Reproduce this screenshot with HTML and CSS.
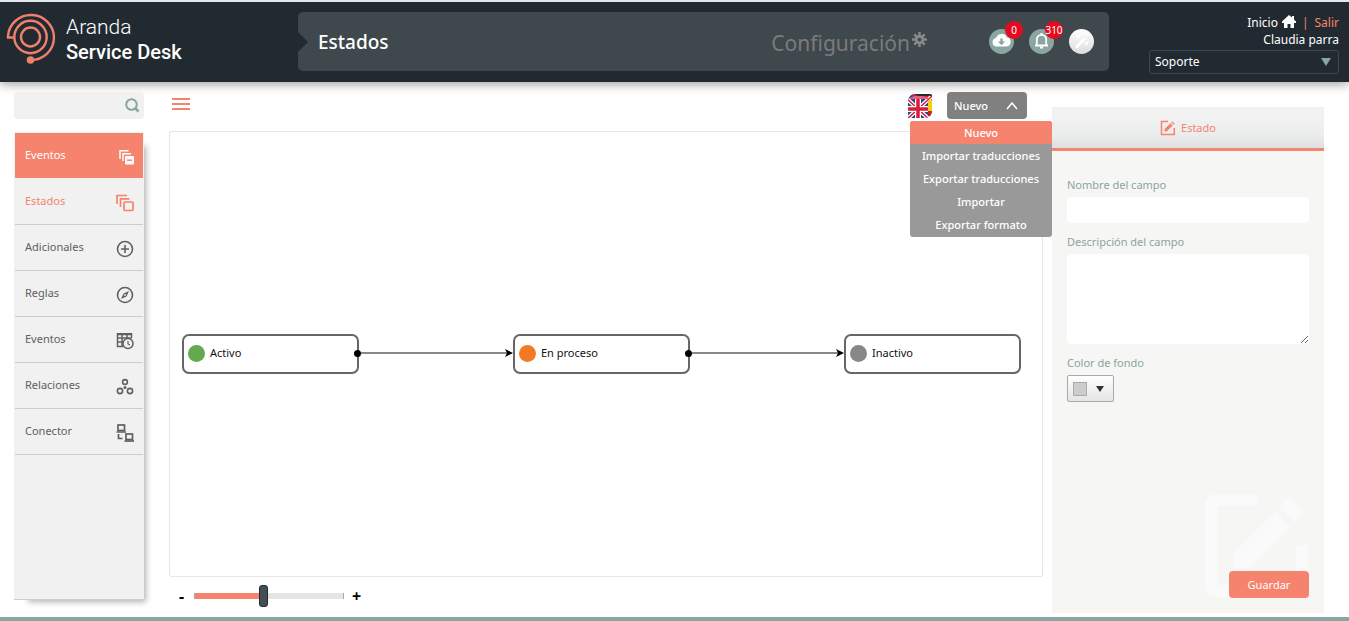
FILE: index.html
```html
<!DOCTYPE html>
<html lang="es">
<head>
<meta charset="utf-8">
<meta name="viewport" content="width=device-width, initial-scale=1">
<title>Aranda Service Desk - Estados</title>
<link rel="stylesheet" href="styles.css">
</head>
<body>
<header class="topbar">
  <div class="brand">
    <svg class="brand-logo" viewBox="0 0 50 52" fill="none" stroke="#f0806c" stroke-width="2.400" aria-hidden="true">
      <circle cx="24.500" cy="25" r="9.500"/>
      <path d="M8.500 25.500H2V24A23 22.500 0 1 1 25 48"/>
      <circle cx="24.500" cy="25" r="16.200"/>
      <circle cx="24.500" cy="48" r="3.800" fill="#f0806c" stroke="none"/>
    </svg>
    <div class="brand-name"><span class="brand-light">Aranda</span><span class="brand-bold">Service Desk</span></div>
  </div>
  <div class="titlebar">
    <h1 class="page-title">Estados</h1>
    <div class="module">Configuración
      <svg class="gear" viewBox="0 0 16 16" aria-hidden="true"><g stroke="#8a8a8a" stroke-width="2.600"><path d="M8 0V16M0 8H16M2.500 2.500L13.500 13.500M13.500 2.500L2.500 13.500"/></g><circle cx="8" cy="8" r="4.800" fill="#8a8a8a"/><circle cx="8" cy="8" r="2" fill="#3e484d"/></svg>
    </div>
    <div class="actions">
      <button class="round" aria-label="Descargas">
        <svg viewBox="0 0 25 25" aria-hidden="true"><path fill="#fff" d="M7.500 17.500a4.300 4.300 0 0 1-.5-8.500 5.800 5.800 0 0 1 10.800-.8 4.700 4.700 0 0 1-.3 9.300z"/><path fill="#8ba5a1" d="M11.300 9.500h2.400v3h2.500l-3.700 3.700-3.700-3.700h2.500z"/></svg>
        <span class="badge">0</span>
      </button>
      <button class="round" aria-label="Notificaciones">
        <svg viewBox="0 0 25 25" fill="none" stroke="#fff" stroke-width="1.800" aria-hidden="true"><path d="M6 16.500h13M7.800 16.500v-6a4.700 4.700 0 0 1 9.400 0v6"/><path d="M12.500 4v2M11 18.500h3" stroke-width="2"/></svg>
        <span class="badge">310</span>
      </button>
      <button class="round round-light" aria-label="Asistente">
        <svg viewBox="0 0 25 25" stroke="#fff" fill="none" aria-hidden="true"><path stroke-width="3" d="M7 18.500L16 9.500"/><path stroke-width="1.500" d="M8 6l3 3M11 6L8 9M16 13l3 3M19 13l-3 3M16 5l2 2"/></svg>
      </button>
    </div>
  </div>
  <div class="account">
    <nav class="account-links">
      <a href="#">Inicio <svg class="home" viewBox="0 0 14 13" aria-hidden="true"><path fill="#fff" d="M7 0l3 2.600V1h2v3.500l2 2V8h-2v5H8.500V9h-3v4H2V8H0V6.500z"/></svg></a>
      <span class="sep">|</span>
      <a class="logout" href="#">Salir</a>
    </nav>
    <div>Claudia parra</div>
    <div class="role">
      <select class="role-select" aria-label="Rol"><option>Soporte</option></select>
      <svg class="role-arrow" viewBox="0 0 10 8" aria-hidden="true"><path fill="#8ba5a1" d="M0 0h10L5 8z"/></svg>
    </div>
  </div>
</header>

<main class="main">
  <aside class="side">
    <div class="search">
      <input class="search-input" type="text" aria-label="Buscar">
      <svg class="search-icon" viewBox="0 0 15 15" fill="none" stroke="#8ba5a1" aria-hidden="true"><circle cx="6.500" cy="6.500" r="5.300" stroke-width="2"/><path d="M10 10l3.500 3.500" stroke-width="2.500"/></svg>
    </div>
    <nav class="menu">
      <a class="item item-head" href="#">Eventos
        <svg class="icon" viewBox="0 0 18 18" fill="none" stroke="#fff" stroke-width="1.500" aria-hidden="true"><path d="M4 11V2.800h8.500M7 13V5.800h8"/><rect x="9" y="8" width="9" height="8.500" rx="1" fill="#fff" stroke="none"/><path stroke="#f6836e" d="M11 12.200h5"/></svg></a>
      <a class="item item-current" href="#">Estados
        <svg class="icon" viewBox="0 0 18 18" fill="none" stroke="#f6836e" stroke-width="1.700" aria-hidden="true"><path d="M1 10V1.500h10M4.500 13V4.800h9"/><rect x="8" y="8" width="9" height="8.500" rx="1"/></svg></a>
      <a class="item" href="#">Adicionales
        <svg class="icon" viewBox="0 0 18 18" fill="none" stroke="#606060" stroke-width="1.600" aria-hidden="true"><circle cx="9" cy="9" r="7.500"/><path d="M9 5v8M5 9h8"/></svg></a>
      <a class="item" href="#">Reglas
        <svg class="icon" viewBox="0 0 18 18" fill="none" stroke="#606060" stroke-width="1.600" aria-hidden="true"><circle cx="9" cy="9" r="7.500"/><path stroke="none" fill="#606060" fill-rule="evenodd" d="M13 5l-2.500 5.500L5 13l2.500-5.500zM9 8.100a.9.9 0 1 0 0 1.800.9.9 0 0 0 0-1.800z"/></svg></a>
      <a class="item" href="#">Eventos
        <svg class="icon" viewBox="0 0 18 18" fill="none" stroke="#606060" stroke-width="1.500" aria-hidden="true"><path d="M7 14.500H1.500V1.800h14V6M1.500 2.500h14M1.500 6h14M1.500 10H7M6 1.500v13M11 1.500V6"/><circle cx="12" cy="11.500" r="5"/><path d="M12 9v3l2 1" stroke-width="1.200"/></svg></a>
      <a class="item" href="#">Relaciones
        <svg class="icon" viewBox="0 0 18 18" fill="none" stroke="#606060" stroke-width="1.600" aria-hidden="true"><circle cx="9" cy="4" r="2.400"/><circle cx="4" cy="13" r="2.600"/><circle cx="14" cy="13" r="2.600"/><circle cx="9" cy="9.500" r="1.500" fill="#606060" stroke="none"/></svg></a>
      <a class="item" href="#">Conector
        <svg class="icon" viewBox="0 0 18 18" fill="none" stroke="#606060" stroke-width="1.700" aria-hidden="true"><rect x="2" y="1" width="6.500" height="5.500"/><path d="M.5 8H10M2.500 10v4.500h4"/><rect x="10" y="10" width="6.500" height="5.500"/><path d="M8.500 17H18"/></svg></a>
    </nav>
  </aside>

  <section class="work">
    <div class="toolbar">
      <button class="burger" aria-label="Menú"><span></span><span></span><span></span></button>
      <div class="tools">
        <button class="flag" aria-label="Idioma">
          <svg viewBox="0 0 24 24" aria-hidden="true"><defs><clipPath id="flag-shape"><path d="M0 7Q1 0 7 0H22Q24 0 24 3V17Q23 24 17 24H0z"/></clipPath></defs><g clip-path="url(#flag-shape)"><path fill="#2b478c" d="M0 0h24v24H0z"/><path fill="#d81e30" d="M5 0h19v5H5z"/><path fill="#27292e" d="M8 0h16v2H8z"/><path stroke="#fff" stroke-width="4" d="M-3 3L23 27M23 3L-3 27"/><path stroke="#d91d3a" stroke-width="1.500" d="M-3 3L23 27M23 3L-3 27"/><path stroke="#fff" stroke-width="6" d="M10 3V24M0 15H20"/><path stroke="#d91d3a" stroke-width="3.500" d="M10 3V24M0 15H20"/><path fill="#f7cc14" d="M20 6h4v12h-4z"/><path fill="#c81c22" d="M20 17h4v5h-4z"/><path fill="#ea5a82" d="M1 5Q5 1 12 2Q19 2 22 5z"/></g></svg>
        </button>
        <div class="dropdown">
          <button class="drop-button" aria-expanded="true">Nuevo
            <svg class="chevron" viewBox="0 0 12 8" fill="none" stroke="#fff" stroke-width="1.500" aria-hidden="true"><path d="M1 7l5-6 5 6"/></svg></button>
          <div class="drop-menu">
            <button class="option option-on">Nuevo</button>
            <button class="option">Importar traducciones</button>
            <button class="option">Exportar traducciones</button>
            <button class="option">Importar</button>
            <button class="option">Exportar formato</button>
          </div>
        </div>
      </div>
    </div>
    <div class="canvas">
      <div class="node"><span class="dot dot-green"></span>Activo</div>
      <div class="link"><span class="link-start"></span><span class="link-line"></span><svg class="link-end" viewBox="0 0 8 8" aria-hidden="true"><path d="M0 0l8 4-8 4 2-4z"/></svg></div>
      <div class="node"><span class="dot dot-orange"></span>En proceso</div>
      <div class="link"><span class="link-start"></span><span class="link-line"></span><svg class="link-end" viewBox="0 0 8 8" aria-hidden="true"><path d="M0 0l8 4-8 4 2-4z"/></svg></div>
      <div class="node"><span class="dot dot-gray"></span>Inactivo</div>
    </div>
    <div class="zoom">
      <button class="zoom-button" aria-label="Alejar">-</button>
      <input class="zoom-range" type="range" min="0" max="100" value="46" aria-label="Zoom">
      <button class="zoom-button" aria-label="Acercar">+</button>
    </div>
  </section>

  <section class="panel">
    <h2 class="panel-title">
      <svg class="panel-icon" viewBox="0 0 16 16" aria-hidden="true"><path fill="none" stroke="#f6836e" stroke-width="1.500" d="M8 1.500H1.500v13h12.800V8"/><path fill="#f6836e" d="M4.500 11.500V9l6-5.700 2.200 2.200-6 6zM11.300 2.500l1-1 2.300 2.200-1 1z"/></svg>
      Estado</h2>
    <form class="form">
      <label class="label" for="name">Nombre del campo</label>
      <input class="field" id="name" type="text">
      <label class="label" for="desc">Descripción del campo</label>
      <textarea class="field area" id="desc"></textarea>
      <label class="label" for="color">Color de fondo</label>
      <button class="color" id="color" type="button"><span class="swatch"></span><svg class="color-arrow" viewBox="0 0 8 6" aria-hidden="true"><path fill="#333" d="M0 0h8L4 6z"/></svg></button>
      <div class="form-foot">
        <svg class="watermark" viewBox="0 0 104 104" aria-hidden="true"><g fill="#fafafa"><path d="M52 0H12Q0 0 0 12V91Q0 103 12 103H92Q103 103 103 91V51H91V91H12V12H52z"/><path d="M29 75V59L70 18 85 33 43 75zM74 13L81 6Q84 4 87 6L97 16Q99 19 97 21L90 28z"/></g></svg>
        <button class="save" type="button">Guardar</button>
      </div>
    </form>
  </section>
</main>
<footer class="footer"></footer>
</body>
</html>
```

FILE: styles.css
```css
* { box-sizing: border-box; }
body {
  margin: 0;
  min-height: 100vh;
  display: flex;
  flex-direction: column;
  background: #fff;
  color: #606060;
  font: 11px/16px "Noto Sans", "Open Sans", sans-serif;
}
button, input, select, textarea { font: inherit; margin: 0; }
button { border: 0; padding: 0; background: none; cursor: pointer; }
a { color: inherit; text-decoration: none; }
svg { display: block; flex: none; }

.topbar {
  display: flex;
  align-items: flex-start;
  padding: 10px 10px 8px 6px;
  border-top: 2px solid #e4e8ec;
  background: #222a31;
  color: #fff;
  box-shadow: 0 2px 10px rgba(0, 0, 0, .4);
}
.brand { display: flex; gap: 10px; width: 292px; }
.brand-logo { width: 50px; height: 52px; }
.brand-name { display: flex; flex-direction: column; padding-top: 3px; font-family: Roboto, sans-serif; font-size: 20px; line-height: 25px; }
.brand-light { font-weight: 300; font-size: 21px; }
.brand-bold { font-weight: 500; }
.titlebar {
  flex: 1;
  display: flex;
  align-items: center;
  height: 59px;
  padding: 0 15px 0 20px;
  border-radius: 5px;
  background: #3e484d;
  clip-path: polygon(0 0, 100% 0, 100% 100%, 0 100%, 0 40px, 10px 30px, 0 20px);
}
.page-title { flex: 1; margin: 0; font-size: 19px; font-weight: 500; line-height: 24px; }
.module { display: flex; gap: 2px; padding-top: 2px; color: #7b7b7b; font-size: 21px; line-height: 24px; }
.gear { width: 15px; height: 15px; margin-top: 1px; }
.actions { display: flex; gap: 15px; margin-left: 62px; }
.round { position: relative; width: 25px; height: 25px; border-radius: 50%; background: #8ba5a1; color: #fff; }
.round-light { background: linear-gradient(#fff, #dcdcdc); }
.badge {
  position: absolute;
  top: -8px;
  right: -9px;
  display: flex;
  align-items: center;
  justify-content: center;
  width: 18px;
  height: 18px;
  border-radius: 50%;
  background: #e60a20;
  font-size: 10px;
}
.account { width: 190px; margin-left: 40px; padding-top: 2px; text-align: right; font-size: 12px; line-height: 17px; }
.account-links { display: flex; justify-content: flex-end; gap: 6px; }
.account-links a { display: flex; align-items: center; gap: 4px; }
.home { width: 14px; height: 13px; margin-bottom: 3px; }
.sep, .logout { color: #f6836e; }
.role { position: relative; margin-top: 2px; }
.role-select {
  display: block;
  width: 100%;
  height: 24px;
  padding: 0 20px 2px 5px;
  appearance: none;
  border: 1px solid #3e484d;
  border-radius: 3px;
  background: #222a31;
  color: #fff;
}
.role-arrow { position: absolute; top: 8px; right: 8px; width: 10px; height: 8px; pointer-events: none; }

.main { flex: 1; display: flex; padding: 10px 25px 4px 14px; }
.side { width: 130px; display: flex; flex-direction: column; gap: 13px; padding-bottom: 13px; }
.search { display: flex; align-items: center; height: 27px; padding-right: 4px; border-radius: 4px; background: #f1f1f1; }
.search-input { flex: 1; min-width: 0; border: 0; padding: 0 8px; background: none; outline: 0; }
.search-icon { width: 15px; height: 15px; }
.menu {
  flex: 1;
  padding: 1px;
  background: #f1f1f1;
  border-bottom: 1px solid #ccc;
  box-shadow: 8px 8px 6px -6px rgba(0, 0, 0, .3);
}
.item {
  display: flex;
  align-items: center;
  justify-content: space-between;
  height: 46px;
  padding: 0 9px 2px 10px;
  border-bottom: 1px solid #ccc;
}
.item-head { height: 45px; margin-bottom: 1px; border: 0; background: #f6836e; color: #fff; }
.item-current { color: #f6836e; }
.icon { width: 18px; height: 18px; margin-top: 4px; }

.work { flex: 1; display: flex; flex-direction: column; margin: 0 9px 0 25px; }
.toolbar { display: flex; justify-content: space-between; align-items: flex-start; height: 39px; padding-right: 16px; }
.burger { display: flex; flex-direction: column; gap: 3px; margin: 6px 0 0 3px; }
.burger span { width: 18px; height: 2px; background: #f6836e; }
.tools { display: flex; gap: 15px; }
.flag { width: 24px; height: 24px; margin-top: 2px; }
.dropdown { position: relative; color: #fff; font-weight: 500; }
.drop-button {
  display: flex;
  align-items: center;
  justify-content: space-between;
  width: 80px;
  height: 27px;
  padding: 0 9px 0 7px;
  border-radius: 4px;
  background: #808080;
  color: #fff;
}
.chevron { width: 12px; height: 8px; }
.drop-menu {
  position: absolute;
  z-index: 2;
  top: 29px;
  right: -25px;
  display: flex;
  flex-direction: column;
  width: 142px;
  padding-bottom: 1px;
  border-radius: 3px;
  background: #999;
}
.option { height: 23px; color: #fff; white-space: nowrap; }
.option-on { border-radius: 3px; background: #f6836e; }
.canvas { flex: 1; display: flex; align-items: center; padding: 0 21px 0 12px; border: 1px solid #e4e6e9; border-radius: 2px; }
.node {
  display: flex;
  align-items: center;
  gap: 5px;
  width: 177px;
  height: 40px;
  padding: 0 4px 2px;
  border: 2px solid #666;
  border-radius: 7px;
  color: #111;
}
.dot { width: 17px; height: 17px; border-radius: 50%; }
.dot-green { background: #63a94e; }
.dot-orange { background: #f07b22; }
.dot-gray { background: #888; }
.link { flex: 1; display: flex; align-items: center; margin-left: -5px; padding-bottom: 2px; }
.link-start { width: 7px; height: 7px; border-radius: 50%; background: #000; }
.link-line { flex: 1; height: 2px; margin-right: -6px; background: #888; }
.link-end { width: 8px; height: 8px; }
.zoom { display: flex; align-items: center; gap: 8px; height: 36px; padding: 2px 0 0 8px; }
.zoom-button { width: 9px; color: #000; font-size: 16px; font-weight: 700; line-height: 20px; }
.zoom-range {
  width: 150px;
  height: 6px;
  appearance: none;
  border: solid #aaa;
  border-width: 0 1px;
  background: linear-gradient(90deg, #f6836e 46%, #e4e4e4 46%);
}
.zoom-range::-webkit-slider-thumb { appearance: none; width: 9px; height: 22px; border: 1px solid #222a31; border-radius: 3px; background: #434e55; }

.panel { display: flex; flex-direction: column; width: 272px; margin-top: 15px; background: #f6f6f4; }
.panel-title {
  display: flex;
  align-items: center;
  justify-content: center;
  gap: 5px;
  height: 44px;
  margin: 0;
  border-bottom: 3px solid #f6836e;
  background: linear-gradient(#f2f2f2 20%, #ebecec 70%, #dedfe2);
  color: #f6836e;
  font-size: 11px;
  font-weight: 400;
}
.panel-icon { width: 16px; height: 16px; }
.form { flex: 1; display: flex; flex-direction: column; align-items: flex-start; padding: 26px 15px 15px; }
.label { margin-bottom: 4px; color: #8ba5a1; }
.field { display: block; width: 100%; height: 26px; margin-bottom: 11px; padding: 4px 8px; border: 0; border-radius: 4px; background: #fff; }
.area { height: 90px; resize: vertical; }
.color {
  display: flex;
  align-items: center;
  justify-content: space-between;
  width: 47px;
  height: 27px;
  padding: 0 9px 0 5px;
  border: 1px solid #aaa;
  border-radius: 2px;
  background: linear-gradient(#fff, #e4e4e4);
}
.swatch { width: 14px; height: 14px; border: 1px solid #aaa; background: #ccc; }
.color-arrow { width: 8px; height: 6px; }
.form-foot { display: grid; justify-items: end; align-items: end; width: 100%; margin-top: auto; }
.watermark { grid-area: 1 / 1; width: 104px; height: 104px; }
.save { grid-area: 1 / 1; width: 80px; height: 27px; border-radius: 4px; background: #f6836e; color: #fff; }
.footer { height: 4px; background: #8ba5a1; }
```
